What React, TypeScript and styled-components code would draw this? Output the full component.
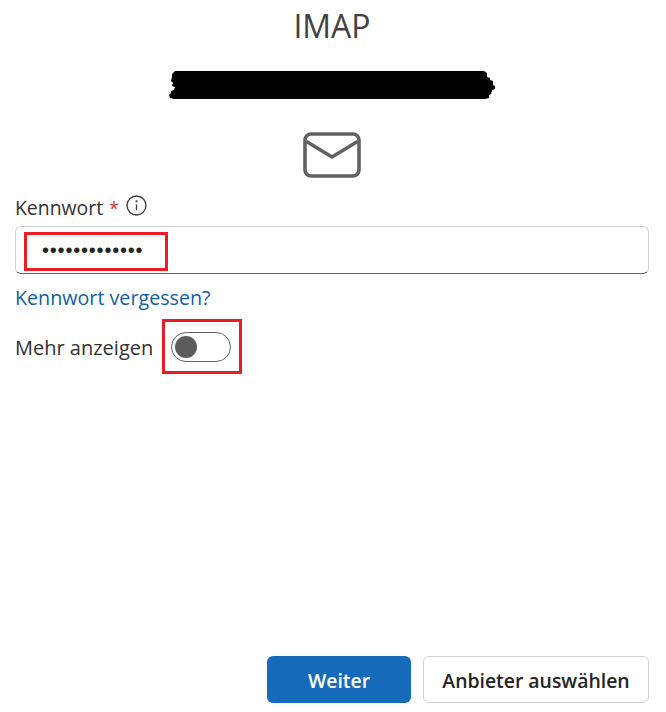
import React from 'react';
import styled, { createGlobalStyle } from 'styled-components';

const GlobalStyle = createGlobalStyle`
  html, body {
    margin: 0;
    padding: 0;
    background: #ffffff;
  }
  body {
    font-family: "Open Sans", "Noto Sans", sans-serif;
  }
`;

function App() {
  return (
    <Page>
      <GlobalStyle />
      <Title>IMAP</Title>
      <Redaction viewBox="0 0 326 30" aria-hidden="true">
        <path
          d="M6 1 L315 1 L318 3 L318 7 L321 8 L321 10 L324 11 L324 15 L326 16 L326 19 L323 20 L322 24 L320 25 L320 28 L316 29 L5 29 L1 28 L0 25 L2 23 L2 21 L5 20 L6 17 L3 16 L4 13 L2 11 L3 7 L3 4 Z"
          fill="#000"
        />
      </Redaction>
      <MailIcon viewBox="0 0 58 46" aria-hidden="true">
        <rect x="2" y="2" width="54" height="42" rx="6" />
        <path d="M3.5 9.5 L29 25 L54.5 9.5" />
      </MailIcon>
      <Form>
        <LabelRow>
          <Label>Kennwort</Label>
          <Required>*</Required>
          <InfoIcon viewBox="0 0 20 20" aria-hidden="true">
            <circle cx="10" cy="10" r="9" />
            <path d="M10 9 V14.5" />
            <circle className="dot" cx="10" cy="6" r="1.1" />
          </InfoIcon>
        </LabelRow>
        <InputBox>
          <Dots>•••••••••••••</Dots>
          <Highlight $variant="input" />
        </InputBox>
        <ForgotLink href="#">Kennwort vergessen?</ForgotLink>
        <ToggleRow>
          <ToggleLabel>Mehr anzeigen</ToggleLabel>
          <Toggle>
            <Knob />
            <Highlight $variant="toggle" />
          </Toggle>
        </ToggleRow>
      </Form>
      <Footer>
        <PrimaryButton>Weiter</PrimaryButton>
        <SecondaryButton>Anbieter auswählen</SecondaryButton>
      </Footer>
    </Page>
  );
}

const Page = styled.div`
  width: 666px;
  height: 712px;
  box-sizing: border-box;
  padding: 0 17px 9px 15px;
  display: flex;
  flex-direction: column;
  align-items: center;
  overflow: hidden;
`;

const Title = styled.h1`
  margin: 4px 0 0;
  font-size: 32px;
  line-height: 44px;
  font-weight: 400;
  color: #424242;
`;

const Redaction = styled.svg`
  width: 326px;
  height: 30px;
  margin-top: 22px;
  flex: none;
`;

const MailIcon = styled.svg`
  width: 58px;
  height: 46px;
  margin-top: 32px;
  flex: none;
  fill: none;
  stroke: #616161;
  stroke-width: 3.6;
  stroke-linejoin: round;
`;

const Form = styled.div`
  align-self: stretch;
  flex: 1;
  margin-top: 15px;
  display: flex;
  flex-direction: column;
  align-items: flex-start;
`;

const LabelRow = styled.div`
  display: flex;
  align-items: center;
  height: 28px;
  padding-top: 1px;
`;

const Label = styled.span`
  font-size: 19.4px;
  line-height: 28px;
  color: #323130;
`;

const ToggleLabel = styled(Label)`
  font-size: 20px;
`;

const Required = styled.span`
  font-size: 18px;
  line-height: 28px;
  color: #d13438;
  margin-left: 6px;
`;

const InfoIcon = styled.svg`
  width: 21px;
  height: 21px;
  margin-left: 7px;
  margin-top: -5px;
  fill: none;
  stroke: #424242;
  stroke-width: 1.3;

  .dot {
    fill: #424242;
    stroke: none;
  }
`;

const InputBox = styled.div`
  position: relative;
  align-self: stretch;
  box-sizing: border-box;
  height: 48px;
  margin-top: 4px;
  padding-left: 26px;
  display: flex;
  align-items: center;
  border: 1px solid #d1d1d1;
  border-bottom-color: #616161;
  border-radius: 6px;
`;

const Dots = styled.span`
  font-family: "Liberation Sans", sans-serif;
  font-size: 20px;
  letter-spacing: 0.8px;
  color: #242424;
`;

const Highlight = styled.div<{ $variant: 'input' | 'toggle' }>`
  position: absolute;
  box-sizing: border-box;
  border: 3px solid #ed1c24;
  ${({ $variant }) =>
    $variant === 'input'
      ? 'left: 8px; top: 5px; width: 144px; height: 39px;'
      : 'left: -10px; top: -14px; width: 80px; height: 55px;'}
`;

const ForgotLink = styled.a`
  margin-top: 10px;
  font-size: 19.7px;
  line-height: 28px;
  color: #115ea3;
  text-decoration: none;
`;

const ToggleRow = styled.div`
  display: flex;
  align-items: center;
  margin-top: 20px;
`;

const Toggle = styled.div`
  position: relative;
  box-sizing: border-box;
  width: 60px;
  height: 30px;
  margin: 0 0 2px 18px;
  padding-left: 3px;
  display: flex;
  align-items: center;
  border: 1px solid #616161;
  border-radius: 15px;
`;

const Knob = styled.div`
  width: 22px;
  height: 22px;
  border-radius: 50%;
  background: #5c5c5c;
`;

const Footer = styled.div`
  align-self: stretch;
  display: flex;
  justify-content: flex-end;
  gap: 12px;
`;

const PrimaryButton = styled.button`
  width: 144px;
  height: 47px;
  padding: 2px 0 0;
  border: none;
  border-radius: 6px;
  background: #156bba;
  color: #ffffff;
  font-family: inherit;
  font-size: 19.4px;
  font-weight: 600;
`;

const SecondaryButton = styled.button`
  width: 226px;
  height: 47px;
  padding: 2px 0 0;
  border: 1px solid #d1d1d1;
  border-radius: 6px;
  background: #ffffff;
  color: #242424;
  font-family: inherit;
  font-size: 19.4px;
  font-weight: 600;
`;

export default App;
